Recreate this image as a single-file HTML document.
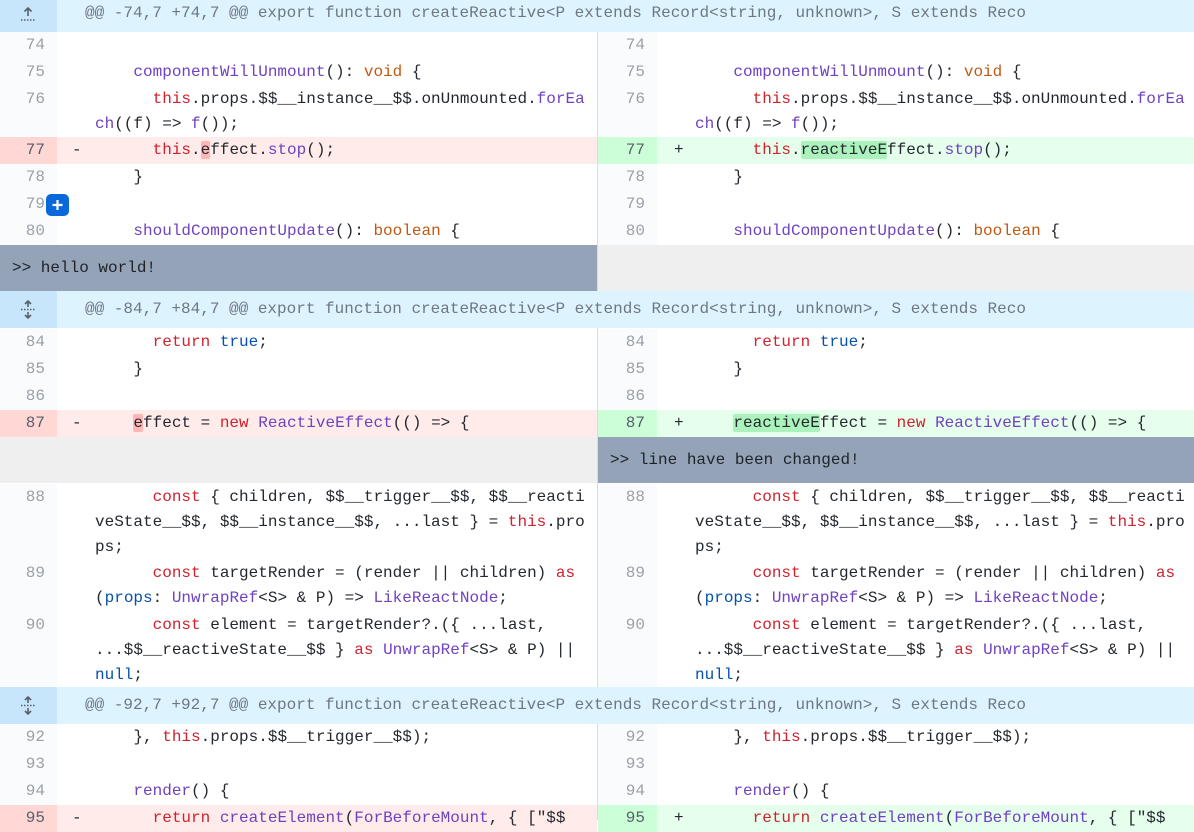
<!DOCTYPE html>
<html><head><meta charset="utf-8"><style>
body{margin:0;width:1194px;height:820px;overflow:hidden;background:#fff;position:relative;font-family:"Liberation Mono","DejaVu Sans Mono",monospace;font-size:16px;color:#24292f}
.r{position:absolute;line-height:25px;box-sizing:border-box;padding-top:1px}
.L{left:0;width:597px}.R{left:598px;width:596px}
.n{position:absolute;left:0;top:0;bottom:0;width:57px;text-align:right;padding-right:12px;padding-top:1px;box-sizing:border-box;color:#9aa1a9;background:#fafbfc}
.R .n{width:59px}
.s{position:absolute;left:72px}
.R .s{left:76px}
.c{position:absolute;left:95px;white-space:pre}
.R .c{left:97px}
.d{background:#ffebe9}.d .n{background:#ffd7d5;color:#57606a}
.a{background:#e6ffec}.a .n{background:#ccffd8;color:#57606a}
.k{color:#cf222e}.f{color:#6f42c1}.o{color:#c05a12}.b{color:#0550ae}
.hd{background:#ff818280;border-radius:2px}.ha{background:#abf2bc;border-radius:2px}
.h{position:absolute;left:0;width:1194px;height:38px;background:#ddf4ff;color:#6e7781;line-height:38px;white-space:pre}
.h .i{position:absolute;left:0;top:0;width:57px;height:38px;background:#c8e6fb}
.h .t{position:absolute;left:85px}
.w{position:absolute;background:#94a3b8;color:#1f2328;line-height:46px;padding-left:12px;box-sizing:border-box;white-space:pre}
.g{position:absolute;background:#efefef}
.div{position:absolute;left:597px;top:0;width:1px;height:820px;background:#d8dde3}
</style></head><body>
<div class="div"></div>

<div class="h" style="top:-6px"><div class="i"><svg width="57" height="38" viewBox="0 0 57 38"><path d="M28 14v8M24.5 17.5L28 14l3.5 3.5" stroke="#57606a" stroke-width="1.6" fill="none"/><path d="M21 26h14" stroke="#57606a" stroke-width="1.4" stroke-dasharray="1.5 1.5"/></svg></div><span class="t">@@ -74,7 +74,7 @@ export function createReactive&lt;P extends Record&lt;string, unknown&gt;, S extends Reco</span></div>

<div class="r L" style="top:32px;height:26.5px"><div class="n">74</div></div>
<div class="r R" style="top:32px;height:26.5px"><div class="n">74</div></div>
<div class="r L" style="top:58.5px;height:27px"><div class="n">75</div><div class="c">    <span class="f">componentWillUnmount</span>(): <span class="o">void</span> {</div></div>
<div class="r R" style="top:58.5px;height:27px"><div class="n">75</div><div class="c">    <span class="f">componentWillUnmount</span>(): <span class="o">void</span> {</div></div>
<div class="r L" style="top:85.5px;height:51.5px"><div class="n">76</div><div class="c">      <span class="k">this</span>.props.$$__instance__$$.onUnmounted.<span class="f">forEa</span>
<span class="f">ch</span>((f) =&gt; <span class="f">f</span>());</div></div>
<div class="r R" style="top:85.5px;height:51.5px"><div class="n">76</div><div class="c">      <span class="k">this</span>.props.$$__instance__$$.onUnmounted.<span class="f">forEa</span>
<span class="f">ch</span>((f) =&gt; <span class="f">f</span>());</div></div>
<div class="r L d" style="top:137px;height:27px"><div class="n">77</div><div class="s">-</div><div class="c">      <span class="k">this</span>.<span class="hd">e</span>ffect.<span class="f">stop</span>();</div></div>
<div class="r R a" style="top:137px;height:27px"><div class="n">77</div><div class="s">+</div><div class="c">      <span class="k">this</span>.<span class="ha">reactiveE</span>ffect.<span class="f">stop</span>();</div></div>
<div class="r L" style="top:164px;height:27px"><div class="n">78</div><div class="c">    }</div></div>
<div class="r R" style="top:164px;height:27px"><div class="n">78</div><div class="c">    }</div></div>
<div class="r L" style="top:191px;height:27px"><div class="n">79</div></div>
<div class="r R" style="top:191px;height:27px"><div class="n">79</div></div>
<div style="position:absolute;left:46px;top:194px;width:23px;height:22px;background:#0969da;border-radius:5px"><svg width="23" height="22"><path d="M11.5 6v10M6.5 11h10" stroke="#fff" stroke-width="2.2"/></svg></div>
<div class="r L" style="top:218px;height:27px"><div class="n">80</div><div class="c">    <span class="f">shouldComponentUpdate</span>(): <span class="o">boolean</span> {</div></div>
<div class="r R" style="top:218px;height:27px"><div class="n">80</div><div class="c">    <span class="f">shouldComponentUpdate</span>(): <span class="o">boolean</span> {</div></div>
<div class="w" style="left:0;top:245px;width:597px;height:46px">&gt;&gt; hello world!</div>
<div class="g" style="left:598px;top:245px;width:596px;height:46px"></div>

<div class="h" style="top:291px;height:37px;line-height:37px"><div class="i" style="height:37px"><svg width="57" height="37" viewBox="0 0 57 37"><path d="M28 10v6M25 13l3-3 3 3M28 27v-6M25 24l3 3 3-3" stroke="#57606a" stroke-width="1.6" fill="none"/><path d="M21 18.5h14" stroke="#57606a" stroke-width="1.4" stroke-dasharray="1.5 1.5"/></svg></div><span class="t">@@ -84,7 +84,7 @@ export function createReactive&lt;P extends Record&lt;string, unknown&gt;, S extends Reco</span></div>

<div class="r L" style="top:329px;height:26.5px"><div class="n">84</div><div class="c">      <span class="k">return</span> <span class="b">true</span>;</div></div>
<div class="r R" style="top:329px;height:26.5px"><div class="n">84</div><div class="c">      <span class="k">return</span> <span class="b">true</span>;</div></div>
<div class="r L" style="top:355.5px;height:27px"><div class="n">85</div><div class="c">    }</div></div>
<div class="r R" style="top:355.5px;height:27px"><div class="n">85</div><div class="c">    }</div></div>
<div class="r L" style="top:382.5px;height:27px"><div class="n">86</div></div>
<div class="r R" style="top:382.5px;height:27px"><div class="n">86</div></div>
<div class="r L d" style="top:409.5px;height:27px"><div class="n">87</div><div class="s">-</div><div class="c">    <span class="hd">e</span>ffect = <span class="k">new</span> <span class="f">ReactiveEffect</span>(() =&gt; {</div></div>
<div class="r R a" style="top:409.5px;height:27px"><div class="n">87</div><div class="s">+</div><div class="c">    <span class="ha">reactiveE</span>ffect = <span class="k">new</span> <span class="f">ReactiveEffect</span>(() =&gt; {</div></div>
<div class="g" style="left:0;top:437px;width:597px;height:46px"></div>
<div class="w" style="left:598px;top:437px;width:596px;height:46px">&gt;&gt; line have been changed!</div>

<div class="r L" style="top:484px;height:76px"><div class="n">88</div><div class="c">      <span class="k">const</span> { children, $$__trigger__$$, $$__reacti
veState__$$, $$__instance__$$, ...last } = <span class="k">this</span>.pro
ps;</div></div>
<div class="r R" style="top:484px;height:76px"><div class="n">88</div><div class="c">      <span class="k">const</span> { children, $$__trigger__$$, $$__reacti
veState__$$, $$__instance__$$, ...last } = <span class="k">this</span>.pro
ps;</div></div>
<div class="r L" style="top:560px;height:51.5px"><div class="n">89</div><div class="c">      <span class="k">const</span> targetRender = (render || children) <span class="k">as</span>
(<span class="b">props</span>: <span class="f">UnwrapRef</span>&lt;S&gt; &amp; P) =&gt; <span class="f">LikeReactNode</span>;</div></div>
<div class="r R" style="top:560px;height:51.5px"><div class="n">89</div><div class="c">      <span class="k">const</span> targetRender = (render || children) <span class="k">as</span>
(<span class="b">props</span>: <span class="f">UnwrapRef</span>&lt;S&gt; &amp; P) =&gt; <span class="f">LikeReactNode</span>;</div></div>
<div class="r L" style="top:611.5px;height:76px"><div class="n">90</div><div class="c">      <span class="k">const</span> element = targetRender?.({ ...last,
...$$__reactiveState__$$ } <span class="k">as</span> <span class="f">UnwrapRef</span>&lt;S&gt; &amp; P) ||
<span class="b">null</span>;</div></div>
<div class="r R" style="top:611.5px;height:76px"><div class="n">90</div><div class="c">      <span class="k">const</span> element = targetRender?.({ ...last,
...$$__reactiveState__$$ } <span class="k">as</span> <span class="f">UnwrapRef</span>&lt;S&gt; &amp; P) ||
<span class="b">null</span>;</div></div>

<div class="h" style="top:687px;height:37px;line-height:37px"><div class="i" style="height:37px"><svg width="57" height="37" viewBox="0 0 57 37"><path d="M28 10v6M25 13l3-3 3 3M28 27v-6M25 24l3 3 3-3" stroke="#57606a" stroke-width="1.6" fill="none"/><path d="M21 18.5h14" stroke="#57606a" stroke-width="1.4" stroke-dasharray="1.5 1.5"/></svg></div><span class="t">@@ -92,7 +92,7 @@ export function createReactive&lt;P extends Record&lt;string, unknown&gt;, S extends Reco</span></div>

<div class="r L" style="top:724px;height:27px"><div class="n">92</div><div class="c">    }, <span class="k">this</span>.props.$$__trigger__$$);</div></div>
<div class="r R" style="top:724px;height:27px"><div class="n">92</div><div class="c">    }, <span class="k">this</span>.props.$$__trigger__$$);</div></div>
<div class="r L" style="top:751px;height:27px"><div class="n">93</div></div>
<div class="r R" style="top:751px;height:27px"><div class="n">93</div></div>
<div class="r L" style="top:778px;height:27px"><div class="n">94</div><div class="c">    <span class="f">render</span>() {</div></div>
<div class="r R" style="top:778px;height:27px"><div class="n">94</div><div class="c">    <span class="f">render</span>() {</div></div>
<div class="r L d" style="top:805px;height:27px"><div class="n">95</div><div class="s">-</div><div class="c">      <span class="k">return</span> <span class="f">createElement</span>(<span class="f">ForBeforeMount</span>, { ["$$</div></div>
<div class="r R a" style="top:805px;height:27px"><div class="n">95</div><div class="s">+</div><div class="c">      <span class="k">return</span> <span class="f">createElement</span>(<span class="f">ForBeforeMount</span>, { ["$$</div></div>
</body></html>
